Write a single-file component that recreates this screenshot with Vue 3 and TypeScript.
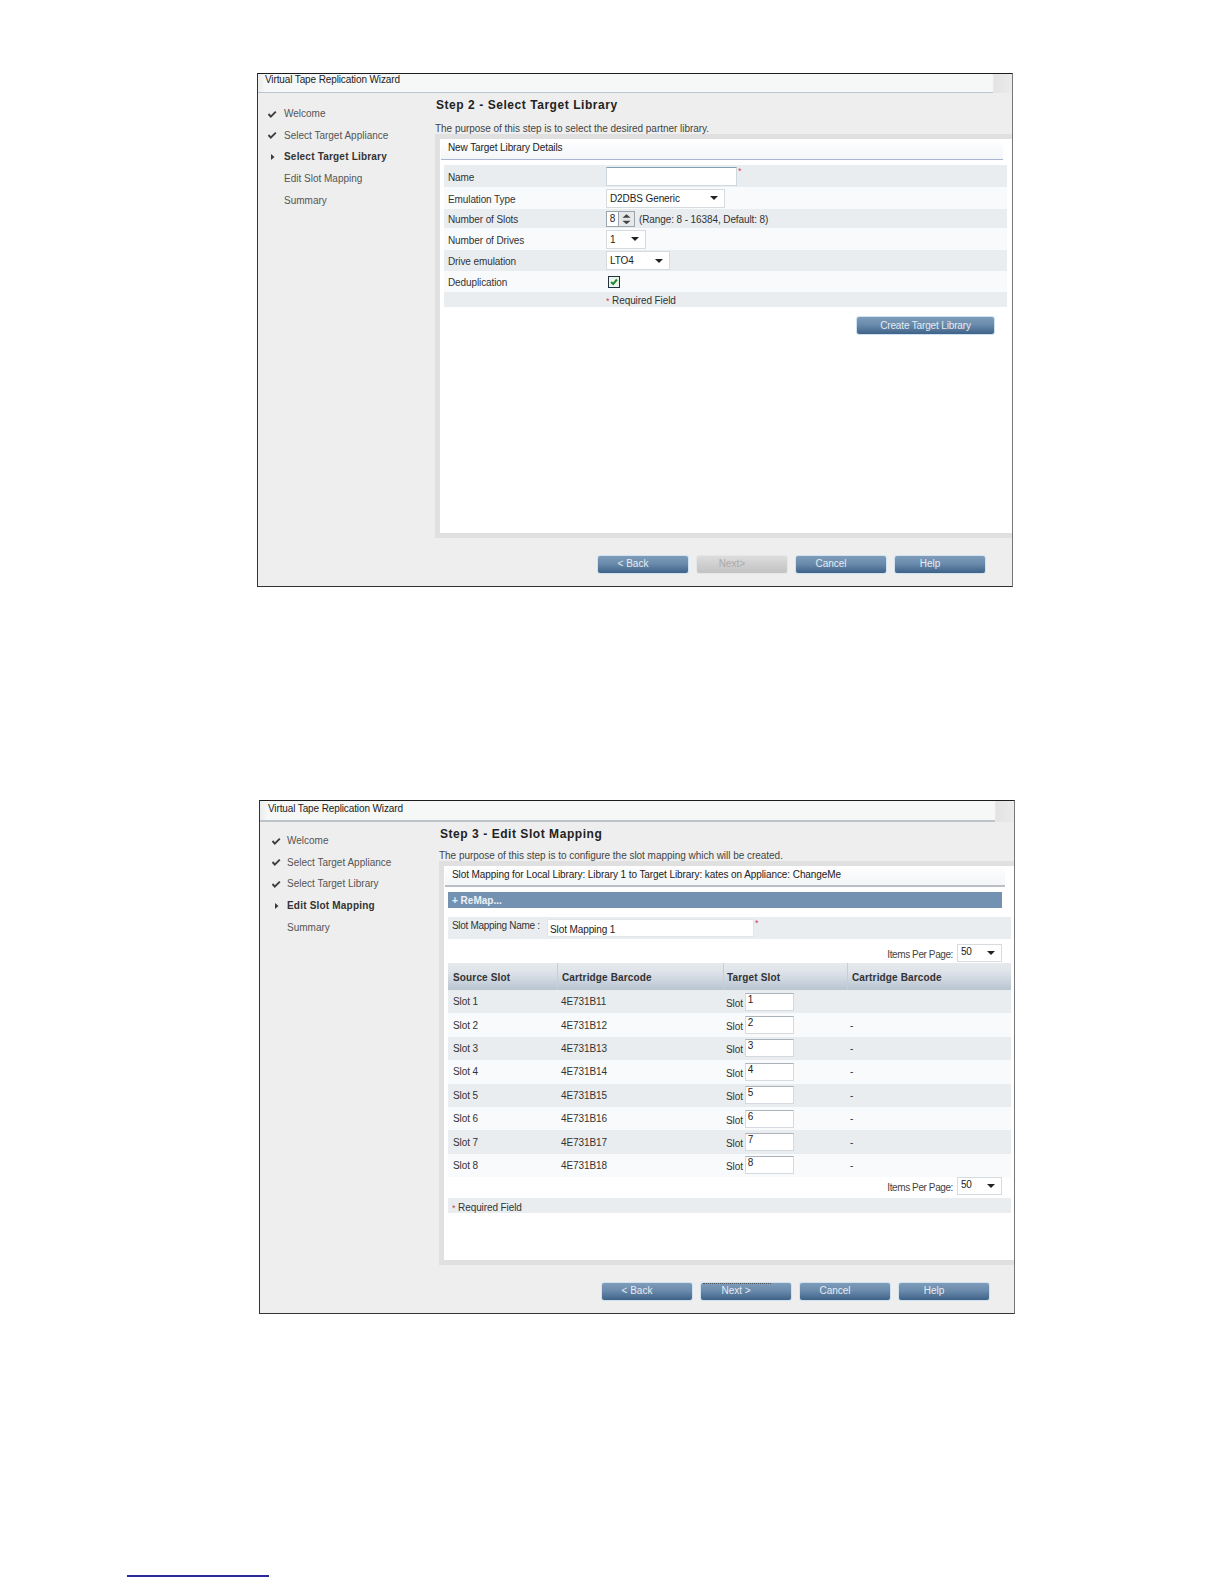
<script setup lang="ts">
interface Step { label: string; state: 'done' | 'active' | 'todo' }
const labels = ['Welcome', 'Select Target Appliance', 'Select Target Library', 'Edit Slot Mapping', 'Summary']
const stepsFor = (active: number): Step[] =>
  labels.map((label, i) => ({ label, state: i < active ? 'done' : i === active ? 'active' : 'todo' }))
const slots = [1, 2, 3, 4, 5, 6, 7, 8]
const columns = ['Source Slot', 'Cartridge Barcode', 'Target Slot', 'Cartridge Barcode']
</script>

<template>
  <div class="page">
    <section class="win win-a">
      <header class="title"><span>Virtual Tape Replication Wizard</span></header>
      <div class="body">
        <nav class="side">
          <div v-for="s in stepsFor(2)" :key="s.label" class="step" :class="s.state">
            <svg v-if="s.state === 'done'" class="mark" viewBox="0 0 10 10"><path d="M1.5 5 L3.8 7.6 L8.8 2.6" fill="none" stroke="#3d3d3d" stroke-width="1.9" /></svg>
            <svg v-else-if="s.state === 'active'" class="mark" viewBox="0 0 10 10"><path d="M4 2 L7.5 5 L4 8 Z" fill="#3d3d3d" /></svg>
            <span v-else class="mark"></span>
            <span>{{ s.label }}</span>
          </div>
        </nav>
        <main class="main">
          <div class="intro">
            <h2>Step 2 - Select Target Library</h2>
            <p>The purpose of this step is to select the desired partner library.</p>
          </div>
          <div class="panel">
            <div class="panel-head">New Target Library Details</div>
            <div class="rows">
              <div class="row grey r22"><label>Name</label><input class="field name" value="" /><i class="req">*</i></div>
              <div class="row r22"><label>Emulation Type</label><div class="select w119"><span>D2DBS Generic</span><b></b></div></div>
              <div class="row grey r19"><label>Number of Slots</label>
                <div class="spin"><span>8</span><em><svg viewBox="0 0 12 12"><path d="M2.5 5 L6 2 L9.5 5 Z M2.5 7.5 L6 10.5 L9.5 7.5 Z" fill="#444" /></svg></em></div>
                <span class="range">(Range: 8 - 16384, Default: 8)</span>
              </div>
              <div class="row r22"><label>Number of Drives</label><div class="select w40"><span>1</span><b></b></div></div>
              <div class="row grey r21"><label>Drive emulation</label><div class="select w64"><span>LTO4</span><b></b></div></div>
              <div class="row r21"><label>Deduplication</label>
                <div class="check"><svg viewBox="0 0 12 12"><path d="M2.5 6 L5 8.5 L9.5 3" fill="none" stroke="#1c8a2c" stroke-width="2.4" /></svg></div>
              </div>
              <div class="row grey r15"><label></label><span class="reqline"><i class="req">*</i> Required Field</span></div>
            </div>
            <div class="create"><button class="btn wide">Create Target Library</button></div>
          </div>
          <footer class="foot">
            <button class="btn">&lt; Back</button>
            <button class="btn off">Next&gt;</button>
            <button class="btn">Cancel</button>
            <button class="btn">Help</button>
          </footer>
        </main>
      </div>
    </section>

    <section class="win win-b">
      <header class="title b"><span>Virtual Tape Replication Wizard</span></header>
      <div class="body">
        <nav class="side">
          <div v-for="s in stepsFor(3)" :key="s.label" class="step" :class="s.state">
            <svg v-if="s.state === 'done'" class="mark" viewBox="0 0 10 10"><path d="M1.5 5 L3.8 7.6 L8.8 2.6" fill="none" stroke="#3d3d3d" stroke-width="1.9" /></svg>
            <svg v-else-if="s.state === 'active'" class="mark" viewBox="0 0 10 10"><path d="M4 2 L7.5 5 L4 8 Z" fill="#3d3d3d" /></svg>
            <span v-else class="mark"></span>
            <span>{{ s.label }}</span>
          </div>
        </nav>
        <main class="main">
          <div class="intro">
            <h2>Step 3 - Edit Slot Mapping</h2>
            <p>The purpose of this step is to configure the slot mapping which will be created.</p>
          </div>
          <div class="panel">
            <div class="panel-head">Slot Mapping for Local Library: Library 1 to Target Library: kates on Appliance: ChangeMe</div>
            <div class="remap">+ ReMap...</div>
            <div class="row grey r22 mapname"><label>Slot Mapping Name :</label><input class="field map" value="Slot Mapping 1" /><i class="req">*</i></div>
            <div class="perpage top"><span>Items Per Page:</span><div class="select w44"><span>50</span><b></b></div></div>
            <div class="tbl">
              <div class="thead">
                <div v-for="(c, i) in columns" :key="i" class="th">{{ c }}</div>
              </div>
              <div v-for="n in slots" :key="n" class="tr" :class="{ grey: n % 2 === 1 }">
                <div class="td">Slot {{ n }}</div>
                <div class="td">4E731B1{{ n }}</div>
                <div class="td target"><span>Slot</span><input class="field small" :value="n" /></div>
                <div class="td">{{ n === 1 ? '' : '-' }}</div>
              </div>
            </div>
            <div class="perpage bottom"><span>Items Per Page:</span><div class="select w44"><span>50</span><b></b></div></div>
            <div class="row grey r15 reqrow"><span><i class="req">*</i> Required Field</span></div>
          </div>
          <footer class="foot">
            <button class="btn">&lt; Back</button>
            <button class="btn focus">Next &gt;</button>
            <button class="btn">Cancel</button>
            <button class="btn">Help</button>
          </footer>
        </main>
      </div>
    </section>

    <div class="footnote-rule"></div>
  </div>
</template>

<style scoped>
.page {
  width: 1224px;
  height: 1584px;
  padding-top: 73px;
  box-sizing: border-box;
  background: #fff;
  font-family: "Liberation Sans", Arial, sans-serif;
  font-size: 10px;
  letter-spacing: -0.1px;
  color: #333;
  display: flex;
  flex-direction: column;
  align-items: flex-start;
}
.win {
  height: 514px;
  box-sizing: border-box;
  border: 1px solid #333;
  border-top-color: #1c1c1c;
  border-right-color: #777;
  background: #eeeeee;
  display: flex;
  flex-direction: column;
}
.win-a { width: 756px; margin-left: 257px; }
.win-b { width: 756px; margin-left: 259px; margin-top: 213px; }

.title {
  height: 19px;
  flex: none;
  background: linear-gradient(90deg, #ececec 0, #f6f7f7 1%, #f6f7f7 97.4%, #e3e3e3 97.6%, #ebebeb 100%);
  position: relative;
}
.title::after {
  content: "";
  position: absolute;
  left: 0;
  right: 19px;
  bottom: 0;
  height: 1px;
  background: #b9c6cf;
}
.title.b { height: 21px; }
.title.b::after { height: 2px; background: #bcc4ca; }
.title span { display: block; padding: 0 0 0 7px; line-height: 11px; color: #222; letter-spacing: -0.12px; }
.win-b .title span { padding: 2px 0 0 8px; }

.body { flex: 1; display: flex; min-height: 0; }
.side { padding: 10px 0 0 9px; box-sizing: border-box; flex: none; }
.win-a .side { width: 177px; }
.win-b .side { width: 179px; padding: 8px 0 0 11px; }
.step { height: 21.6px; display: flex; align-items: center; color: #555; letter-spacing: 0; }
.step.active { font-weight: 700; color: #333; letter-spacing: 0.2px; }
.mark { width: 10px; height: 10px; flex: none; margin-right: 7px; }
.win-b .mark { margin-right: 6px; }

.main { flex: 1; min-width: 0; display: flex; flex-direction: column; }
.intro { height: 41px; flex: none; box-sizing: border-box; }
.win-b .intro { height: 39px; }
.intro h2 { margin: 0; padding: 5px 0 0 1px; font-size: 12px; line-height: 14px; letter-spacing: 0.55px; color: #222; font-weight: 700; }
.intro p { margin: 0; padding: 11px 0 0 0; line-height: 12px; color: #444; letter-spacing: -0.03px; }
.win-b .intro p { padding-top: 9px; }

.panel {
  flex: 1;
  min-height: 0;
  background: #fff;
  border: solid #e0e0e0;
  border-width: 5px 0 5px 5px;
}
.panel-head {
  height: 20px;
  margin: 0 9px 5px 1px;
  padding-left: 7px;
  line-height: 17px;
  border-bottom: 1px solid #a9b6d2;
  color: #222;
  background: linear-gradient(180deg, #fff, #f3f5f8);
}
.win-b .panel-head { line-height: 17px; letter-spacing: -0.08px; border-bottom-color: #b9bfc4; border-bottom-width: 2px; height: 19px; }
.rows { margin: 0 5px 0 4px; }
.row { display: flex; align-items: center; background: #f8fafb; }
.row.grey { background: #e9edf0; }
.row label { width: 162px; padding: 2px 0 0 4px; box-sizing: border-box; flex: none; color: #333; }
.r22 { height: 22px; }
.r21 { height: 21px; }
.r19 { height: 19px; }
.r15 { height: 15px; }
.field {
  box-sizing: border-box;
  border: 1px solid #d4dae0;
  border-top-color: #aab2ba;
  background: #fff;
  padding: 0 0 3px 2px;
  font: inherit;
  letter-spacing: inherit;
  color: #222;
  outline: none;
}
.name { width: 131px; height: 19px; border-color: #cfd8de; border-top-color: #7f9fb5; }
.req { color: #d0405e; font-style: normal; font-size: 9px; line-height: 1; }
.field + .req { align-self: flex-start; margin: 2px 0 0 1px; }
.select {
  box-sizing: border-box;
  height: 19px;
  border: 1px solid #d6dbe0;
  background: #fff;
  display: flex;
  align-items: center;
  justify-content: space-between;
  padding: 0 6px 0 3px;
  color: #222;
}
.select b { width: 0; height: 0; border: 4px solid transparent; border-top: 4px solid #222; border-bottom: 0; }
.w119 { width: 119px; }
.w40 { width: 40px; }
.w64 { width: 64px; }
.w44 { width: 45px; height: 18px; align-items: flex-start; padding-top: 1px; }
.w44 b { margin-top: 5px; }
.spin { width: 29px; height: 16px; box-sizing: border-box; border: 1px solid #9aa5ae; background: #fff; display: flex; }
.spin span { width: 11px; text-align: center; line-height: 14px; border-right: 1px solid #9aa5ae; color: #222; }
.spin em { flex: 1; background: #e6e8ea; display: flex; }
.spin svg { width: 100%; height: 100%; }
.range { margin: 2px 0 0 4px; color: #333; }
.check { width: 12px; height: 12px; box-sizing: border-box; margin-left: 2px; border: 1px solid #1f3340; background: #eef5ee; display: flex; }
.check svg { width: 100%; height: 100%; }
.reqline { color: #333; margin-top: 2px; }
.create { display: flex; justify-content: flex-end; padding: 10px 18px 0 0; }

.btn {
  width: 90px;
  height: 17px;
  padding: 0 20px 2px 0;
  box-sizing: border-box;
  font: inherit;
  letter-spacing: 0;
  color: #e6ecf2;
  border: 0;
  border-radius: 2px;
  background: linear-gradient(180deg, #7f9cba 0, #6a8bac 45%, #3f6288 100%);
  box-shadow: 0 0 0 1px #cfe2f2;
}
.btn.wide { width: 137px; padding: 0 0 1px; letter-spacing: -0.15px; }
.btn.off { background: linear-gradient(180deg, #dcdcdc, #c2c2c2); color: #aaa; box-shadow: 0 0 0 1px #e6e6e6; }
.btn.focus { position: relative; }
.btn.focus::before { content: ""; position: absolute; left: 2px; right: 20px; top: 0; border-top: 1px dotted #555; }

.foot {
  height: 48px;
  flex: none;
  display: flex;
  justify-content: flex-end;
  gap: 9px;
  padding: 18px 27px 0 0;
  box-sizing: border-box;
}
.win-b .foot { padding-right: 25px; }

.remap {
  height: 16px;
  margin: 0 12px 0 4px;
  padding-left: 4px;
  background: #7391b1;
  color: #eef2f6;
  font-weight: 700;
  line-height: 18px;
  letter-spacing: 0;
}
.mapname { margin: 9px 3px 0 4px; }
.mapname label { width: 99px; padding: 2px 0 0 4px; align-self: flex-start; line-height: 13px; letter-spacing: -0.3px; }
.map { width: 207px; height: 18px; border-color: #e2e6ea; padding: 2px 0 0 2px; }
.perpage { display: flex; justify-content: flex-end; align-items: center; gap: 4px; color: #444; letter-spacing: -0.4px; }
.perpage > span { padding-top: 3px; }
.perpage.top { margin: 5px 12px 1px 0; }
.perpage.bottom { margin: 0 12px 3px 0; }
.tbl { margin: 0 3px 0 4px; }
.thead, .tr { display: grid; grid-template-columns: 109px 166px 124px 1fr; }
.thead { height: 27px; background: linear-gradient(180deg, #e6eaee 0, #dfe4ea 30%, #b9c5d3 100%); }
.th { font-weight: 700; color: #333; padding: 8px 0 0 4px; line-height: 13px; border-left: 1px solid #c6ced6; letter-spacing: 0.15px; }
.th:first-child { border-left: 0; padding-left: 5px; }
.th:nth-child(3) { padding-left: 3px; }
.tr { height: 23.4px; background: #f8fafb; align-items: center; }
.tr.grey { background: #e9edf0; }
.td { padding-left: 4px; color: #333; }
.td:first-child { padding-left: 5px; }
.td:last-child { padding-left: 3px; }
.td.target { padding-left: 3px; display: flex; align-items: center; gap: 2px; }
.td.target span { padding-top: 3px; }
.small { width: 49px; height: 18px; padding: 0 0 5px 2px; }
.reqrow { margin: 1px 3px 0 4px; padding-left: 4px; padding-top: 3px; box-sizing: border-box; }
.footnote-rule { width: 142px; height: 2px; background: #2a2a9a; margin: 261px 0 0 127px; }
</style>
